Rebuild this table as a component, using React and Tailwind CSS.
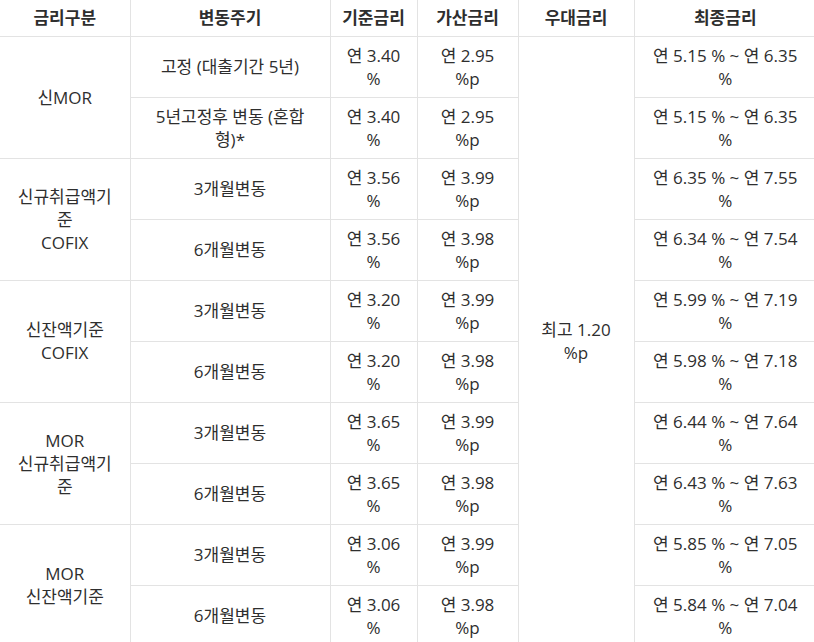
import React from 'react'

const GROUPS = [
  {
    name: ['신MOR'],
    rows: [
      { period: ['고정 (대출기간 5년)'], base: '3.40', add: '2.95', min: '5.15', max: '6.35' },
      { period: ['5년고정후 변동 (혼합', '형)*'], base: '3.40', add: '2.95', min: '5.15', max: '6.35' },
    ],
  },
  {
    name: ['신규취급액기', '준', 'COFIX'],
    rows: [
      { period: ['3개월변동'], base: '3.56', add: '3.99', min: '6.35', max: '7.55' },
      { period: ['6개월변동'], base: '3.56', add: '3.98', min: '6.34', max: '7.54' },
    ],
  },
  {
    name: ['신잔액기준', 'COFIX'],
    rows: [
      { period: ['3개월변동'], base: '3.20', add: '3.99', min: '5.99', max: '7.19' },
      { period: ['6개월변동'], base: '3.20', add: '3.98', min: '5.98', max: '7.18' },
    ],
  },
  {
    name: ['MOR', '신규취급액기', '준'],
    rows: [
      { period: ['3개월변동'], base: '3.65', add: '3.99', min: '6.44', max: '7.64' },
      { period: ['6개월변동'], base: '3.65', add: '3.98', min: '6.43', max: '7.63' },
    ],
  },
  {
    name: ['MOR', '신잔액기준'],
    rows: [
      { period: ['3개월변동'], base: '3.06', add: '3.99', min: '5.85', max: '7.05' },
      { period: ['6개월변동'], base: '3.06', add: '3.98', min: '5.84', max: '7.04' },
    ],
  },
]

const th = 'h-[36px] px-[8px] py-0 text-center font-bold border-l border-b border-[#e3e3e3] first:border-l-0'
const td = 'px-[8px] py-[7px] text-center align-middle whitespace-nowrap border-l border-b border-[#e3e3e3]'

// lines are broken by hand so the wrap matches the original widths
const Lines = ({ items }) => items.map((t, i) => (
  <React.Fragment key={i}>
    {i > 0 && <br />}
    {t}
  </React.Fragment>
))

export default function App() {
  return (
    <div className="w-[814px] h-[642px] overflow-hidden bg-white text-[#2e2e2e] text-[17px] leading-[23px] font-['Open_Sans','Noto_Sans_CJK_KR',sans-serif]">
      <table className="w-[816px] table-fixed border-collapse">
        <colgroup>
          <col className="w-[130px]" />
          <col className="w-[200px]" />
          <col className="w-[87px]" />
          <col className="w-[101px]" />
          <col className="w-[116px]" />
          <col className="w-[182px]" />
        </colgroup>
        <thead>
          <tr>
            <th className={th}>금리구분</th>
            <th className={th}>변동주기</th>
            <th className={th}>기준금리</th>
            <th className={th}>가산금리</th>
            <th className={th}>우대금리</th>
            <th className={th}>최종금리</th>
          </tr>
        </thead>
        <tbody>
          {GROUPS.map((g, gi) =>
            g.rows.map((r, ri) => (
              <tr key={`${gi}-${ri}`} className="h-[61px]">
                {ri === 0 && (
                  <td rowSpan={2} className={`${td} border-l-0`}><Lines items={g.name} /></td>
                )}
                <td className={td}><Lines items={r.period} /></td>
                <td className={td}>연 {r.base}<br />%</td>
                <td className={td}>연 {r.add}<br />%p</td>
                {gi === 0 && ri === 0 && (
                  <td rowSpan={10} className={td}>최고 1.20<br />%p</td>
                )}
                <td className={td}>연 {r.min} % ~ 연 {r.max}<br />%</td>
              </tr>
            ))
          )}
        </tbody>
      </table>
    </div>
  )
}
